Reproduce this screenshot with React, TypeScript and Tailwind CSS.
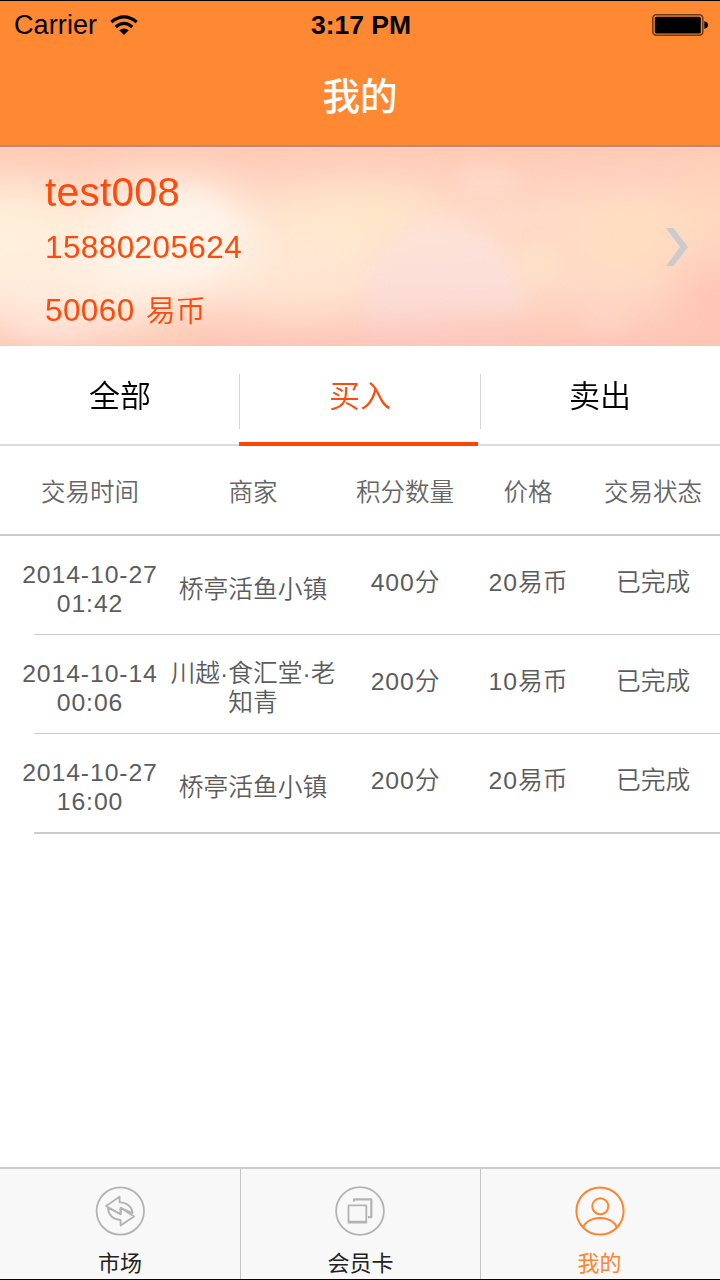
import React from 'react';
import clsx from 'clsx';

interface Trade {
  date: string;
  time: string;
  shop: string;
  amount: string;
  price: string;
  status: string;
}

const TRADES: Trade[] = [
  { date: '2014-10-27', time: '01:42', shop: '桥亭活鱼小镇', amount: '400', price: '20', status: '已完成' },
  { date: '2014-10-14', time: '00:06', shop: '川越·食汇堂·老知青', amount: '200', price: '10', status: '已完成' },
  { date: '2014-10-27', time: '16:00', shop: '桥亭活鱼小镇', amount: '200', price: '20', status: '已完成' },
];

const COLUMNS = ['交易时间', '商家', '积分数量', '价格', '交易状态'];
const GRID = 'grid grid-cols-[152px_174px_130px_116px_134px] pl-3.5 text-center';

const WifiIcon = () => (
  <svg className="ml-[13px] h-5 w-7" viewBox="0 0 28 20" fill="none" stroke="#000" strokeWidth="3.2">
    <path d="M1.3 6.9 Q14 -3.3 26.7 6.9" />
    <path d="M5.7 11.9 Q14 5 22.3 11.9" />
    <path d="M14 20 L9.2 15.3 Q14 11.6 18.8 15.3 Z" fill="#000" stroke="none" />
  </svg>
);

const BatteryIcon = () => (
  <svg className="h-[22px] w-14" viewBox="0 0 56 22">
    <rect x="0.8" y="0.8" width="50" height="20.4" rx="3.5" fill="none" stroke="#6b3a17" strokeWidth="1.5" />
    <rect x="2.8" y="2.8" width="46" height="16.6" rx="1.5" fill="#000" />
    <path d="M52.3 7.2 Q56 8 56 11 Q56 14 52.3 14.8 Z" fill="#000" />
  </svg>
);

const BannerArt = () => (
  <svg className="absolute inset-0 h-full w-full" viewBox="0 0 720 200" preserveAspectRatio="none">
    <defs>
      <linearGradient id="base" x1="0" y1="0" x2="0" y2="1">
        <stop offset="0" stopColor="#ffcab6" />
        <stop offset="0.35" stopColor="#ffdac8" />
        <stop offset="0.7" stopColor="#fedac8" />
        <stop offset="1" stopColor="#fec6b6" />
      </linearGradient>
      <filter id="soft" x="-60%" y="-80%" width="220%" height="260%" colorInterpolationFilters="sRGB">
        <feGaussianBlur stdDeviation="24" />
      </filter>
      <filter id="edge" x="-50%" y="-50%" width="200%" height="200%" colorInterpolationFilters="sRGB">
        <feGaussianBlur stdDeviation="10" />
      </filter>
      <linearGradient id="dome" x1="0" y1="0" x2="0" y2="1">
        <stop offset="0" stopColor="#fee4da" />
        <stop offset="0.6" stopColor="#fce0da" />
        <stop offset="1" stopColor="#fad6d0" />
      </linearGradient>
    </defs>
    <rect width="720" height="200" fill="url(#base)" />
    <g filter="url(#soft)">
      <ellipse cx="0" cy="90" rx="90" ry="50" fill="#fff0da" />
      <ellipse cx="70" cy="145" rx="110" ry="40" fill="#ffebdc" />
      <ellipse cx="355" cy="70" rx="85" ry="28" fill="#ffe9c8" />
      <ellipse cx="300" cy="120" rx="90" ry="44" fill="#ffe6d2" />
      <ellipse cx="630" cy="90" rx="60" ry="36" fill="#ffdebe" />
      <ellipse cx="712" cy="60" rx="24" ry="26" fill="#ffd6b4" />
      <ellipse cx="715" cy="155" rx="45" ry="40" fill="#ffc2b2" />
      <ellipse cx="170" cy="92" rx="88" ry="56" fill="#fff5ea" />
    </g>
    <g filter="url(#edge)">
      <ellipse cx="180" cy="88" rx="55" ry="48" fill="#fff6ec" opacity="0.4" />
      <ellipse cx="50" cy="180" rx="40" ry="14" fill="#ffe6dc" opacity="0.5" />
      <ellipse cx="170" cy="190" rx="30" ry="8" fill="#ffd2b4" opacity="0.6" />
      <ellipse cx="486" cy="34" rx="32" ry="14" fill="#ffe2d6" opacity="0.5" />
      <ellipse cx="538" cy="117" rx="20" ry="18" fill="#ffe6c6" opacity="0.7" />
      <path d="M362 180 Q364 74 440 72 Q518 82 527 166 Z" fill="url(#dome)" opacity="0.85" />
      <ellipse cx="440" cy="194" rx="90" ry="12" fill="#fdcac4" opacity="0.8" />
      <ellipse cx="605" cy="170" rx="26" ry="14" fill="#ffd9cc" opacity="0.5" />
    </g>
  </svg>
);

const MarketIcon = () => (
  <svg className="size-[50px]" viewBox="0 0 50 50" fill="none" stroke="#b3b3b3" strokeWidth="1.8" strokeLinejoin="round">
    <circle cx="25.3" cy="25" r="23.7" />
    <path d="M11 20 L24.6 10.8 V16.2 Q36.5 17.4 37.6 27.2 L25.6 21.8 V28.2 Z" />
    <path d="M39 30.4 L25.6 39.5 V34 Q14 33 12.9 21.8 L25.6 28.2 V21.8 Z" />
  </svg>
);

const CardIcon = () => (
  <svg className="-ml-px size-[50px]" viewBox="0 0 50 50" fill="none" stroke="#b3b3b3" strokeWidth="1.8" strokeLinejoin="round">
    <circle cx="25" cy="25" r="23.9" />
    <path d="M13.5 19.3 H31.3 V36.7 H13.5 Z M13.5 35.6 H31.3" />
    <path d="M19 15.6 V13.4 H36.3 V31.2 H33" strokeWidth="2.2" />
  </svg>
);

const MineIcon = () => (
  <svg className="-ml-0.5 size-[50px]" viewBox="0 0 50 50" fill="none" stroke="#ff8430" strokeWidth="2">
    <circle cx="25" cy="25" r="23.6" />
    <circle cx="25.3" cy="20.3" r="8" />
    <path d="M8.3 41.3 C12.5 29 37.5 29 41.7 41.3" />
  </svg>
);

const NAV = [
  { label: '市场', icon: <MarketIcon />, active: false },
  { label: '会员卡', icon: <CardIcon />, active: false },
  { label: '我的', icon: <MineIcon />, active: true },
];

const TABS = ['全部', '买入', '卖出'];

export default function App() {
  return (
    <div className="flex h-[1280px] w-[720px] flex-col overflow-hidden border-y border-black bg-white font-['Liberation_Sans','Noto_Sans_CJK_SC',sans-serif]">
      <header className="h-[146px] shrink-0 border-b-2 border-[#b38c79] bg-[#ff8833]">
        <div className="grid h-12 grid-cols-3 items-center pr-3 pl-3.5 text-[27px] text-black">
          <div className="flex items-center">
            <span className="tracking-[0.1px]">Carrier</span>
            <WifiIcon />
          </div>
          <span className="pt-px text-center text-[26.5px] font-bold">3:17 PM</span>
          <div className="flex justify-end">
            <BatteryIcon />
          </div>
        </div>
        <h1 className="flex h-24 items-center justify-center text-[37.5px] font-medium text-white">我的</h1>
      </header>

      <section className="relative h-[199px] shrink-0 text-[#ff4a0c]">
        <BannerArt />
        <div className="relative flex h-full items-center justify-between pr-8 pl-[45px]">
          <div className="pt-4">
            <div className="h-[58px] text-[40.5px] leading-[58px] tracking-[0.3px]">test008</div>
            <div className="h-[52px] text-[31.5px] leading-[52px] tracking-[0.4px]">15880205624</div>
            <div className="h-[74px] text-[31.5px] leading-[74px] tracking-[0.4px]">
              50060 <span className="ml-0.5 text-[30px] font-[350] tracking-normal">易币</span>
            </div>
          </div>
          <svg className="h-[38px] w-[22px]" viewBox="0 0 22 38">
            <path d="M0 0 H7.5 L22 19 L7.5 38 H0 L14 19 Z" fill="#cbcbcb" />
          </svg>
        </div>
      </section>

      <nav className="grid h-[100px] shrink-0 grid-cols-3 border-b-2 border-[#dcdcdc]">
        {TABS.map((tab, i) => (
          <div
            key={tab}
            className={clsx(
              'relative flex h-[100px] justify-center pt-[27px] text-[31px] leading-[48px] font-[350]',
              i === 1 ? 'text-[#ff4a0c]' : 'text-black'
            )}
          >
            {tab}
            {i > 0 && <span className={clsx('absolute top-7 h-[55px] w-px bg-[#d8d8d8]', i === 1 ? '-left-px' : 'left-0')} />}
            {i === 1 && <span className="absolute bottom-0 -left-px h-1 w-[239px] bg-[#ff4400]" />}
          </div>
        ))}
      </nav>

      <div className={clsx(GRID, 'h-[90px] shrink-0 items-center border-b-2 border-[#cccccc] pt-1.5 text-[24.5px] font-[350] text-[#666666]')}>
        {COLUMNS.map((c) => (
          <span key={c}>{c}</span>
        ))}
      </div>

      <main className="flex-1">
        {TRADES.map((t, i) => (
          <div key={i} className="relative h-[99px]">
            <div className={clsx(GRID, 'h-full text-[24.75px] leading-[29px] font-[350] text-[#5c5c5c]')}>
              <div className="pt-6 tracking-[0.9px]">
                <div>{t.date}</div>
                <div>{t.time}</div>
              </div>
              <div className="flex items-center justify-center pt-[7px]">
                <span>{t.shop}</span>
              </div>
              <div className="pt-8">
                <span className="tracking-[0.9px]">{t.amount}</span>分
              </div>
              <div className="pt-8">
                <span className="tracking-[0.9px]">{t.price}</span>易币
              </div>
              <div className="pt-8">{t.status}</div>
            </div>
            <div className={clsx('absolute right-0 left-[34px] bg-[#cbcbd0]', i === 2 ? '-bottom-px h-0.5' : 'bottom-0 h-px')} />
          </div>
        ))}
      </main>

      <footer className="grid h-28 shrink-0 grid-cols-3 border-t-2 border-[#cccccc] bg-[#f8f8f8]">
        {NAV.map((item, i) => (
          <div
            key={item.label}
            className={clsx(
              'flex flex-col items-center pt-[17px]',
              i > 0 && 'border-l border-[#c4c4c4]',
              item.active ? 'text-[#ff8430]' : 'text-[#222222]'
            )}
          >
            {item.icon}
            <span className={clsx('mt-3.5 text-[22px] leading-7', item.active && '-ml-0.5')}>{item.label}</span>
          </div>
        ))}
      </footer>
    </div>
  );
}
